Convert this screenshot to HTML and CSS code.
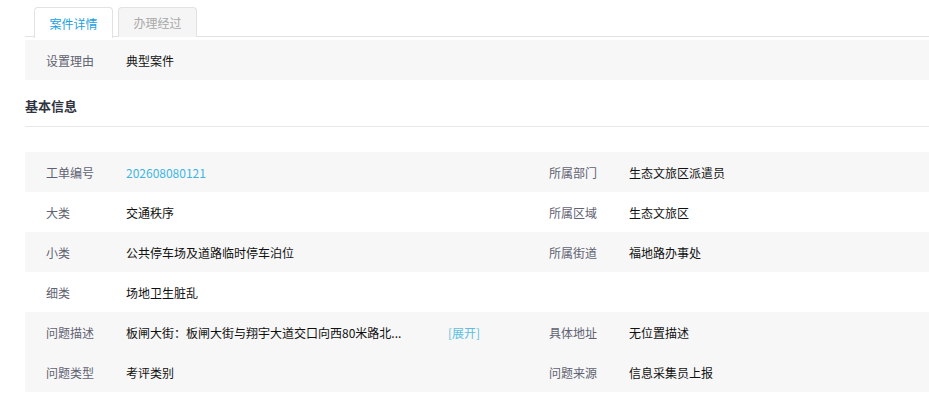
FILE: index.html
```html
<!DOCTYPE html>
<html lang="zh">
<head>
<meta charset="utf-8">
<link rel="stylesheet" href="styles.css">
</head>
<body>
<div class="page">
  <div class="tabs">
    <div class="tab active">案件详情</div>
    <div class="tab">办理经过</div>
  </div>
  <div class="row gray">
    <div class="cell">
      <span class="label">设置理由</span><span class="value">典型案件</span>
    </div>
  </div>
  <div class="section-title">基本信息</div>
  <div class="rows">
    <div class="row gray">
      <div class="cell left"><span class="label">工单编号</span><span class="value link">202608080121</span></div>
      <div class="cell"><span class="label">所属部门</span><span class="value">生态文旅区派遣员</span></div>
    </div>
    <div class="row">
      <div class="cell left"><span class="label">大类</span><span class="value">交通秩序</span></div>
      <div class="cell"><span class="label">所属区域</span><span class="value">生态文旅区</span></div>
    </div>
    <div class="row gray">
      <div class="cell left"><span class="label">小类</span><span class="value">公共停车场及道路临时停车泊位</span></div>
      <div class="cell"><span class="label">所属街道</span><span class="value">福地路办事处</span></div>
    </div>
    <div class="row">
      <div class="cell left"><span class="label">细类</span><span class="value">场地卫生脏乱</span></div>
      <div class="cell"></div>
    </div>
    <div class="row gray">
      <div class="cell left"><span class="label">问题描述</span><span class="value desc">板闸大街：板闸大街与翔宇大道交口向西80米路北...</span><span class="expand">[展开]</span></div>
      <div class="cell"><span class="label">具体地址</span><span class="value">无位置描述</span></div>
    </div>
    <div class="row gray">
      <div class="cell left"><span class="label">问题类型</span><span class="value">考评类别</span></div>
      <div class="cell"><span class="label">问题来源</span><span class="value">信息采集员上报</span></div>
    </div>
  </div>
</div>
</body>
</html>
```

FILE: styles.css
```css
html, body {
  margin: 0;
  padding: 0;
  background: #ffffff;
}
body {
  font-family: "Microsoft YaHei", "Noto Sans CJK SC", "Noto Sans", sans-serif;
  font-size: 12px;
  color: #000;
}
.page {
  padding-left: 25px;
}
.tabs {
  display: flex;
  gap: 5px;
  padding-top: 7px;
  padding-left: 9px;
  border-bottom: 1px solid #e2e2e2;
  height: 29px;
}
.tab {
  width: 77px;
  height: 29px;
  border: 1px solid #e2e2e2;
  border-bottom: none;
  border-radius: 4px 4px 0 0;
  background: #f5f5f5;
  color: #a8a8a8;
  display: flex;
  align-items: center;
  justify-content: center;
  font-size: 12px;
}
.tab.active {
  background: #ffffff;
  color: #1a9fe3;
  height: 30px;
  margin-bottom: -1px;
}
.row {
  display: flex;
  height: 40px;
  align-items: center;
}
.tabs + .row {
  margin-top: 3px;
}
.gray {
  background: #f7f7f7;
}
.cell {
  display: flex;
  align-items: center;
  padding-left: 21px;
}
.cell.left {
  width: 482px;
  flex: none;
}
.label {
  width: 80px;
  flex: none;
  color: #5f6272;
}
.value {
  color: #111;
}
.value.link {
  color: #3eb6e4;
}
.value.desc {
  width: 322px;
  white-space: nowrap;
  overflow: hidden;
}
.expand {
  color: #5cbfe2;
}
.section-title {
  height: 47px;
  line-height: 52px;
  font-size: 13px;
  font-weight: bold;
  color: #30343f;
  border-bottom: 1px solid #e8e8e8;
  box-sizing: border-box;
  margin-bottom: 25px;
}
```
